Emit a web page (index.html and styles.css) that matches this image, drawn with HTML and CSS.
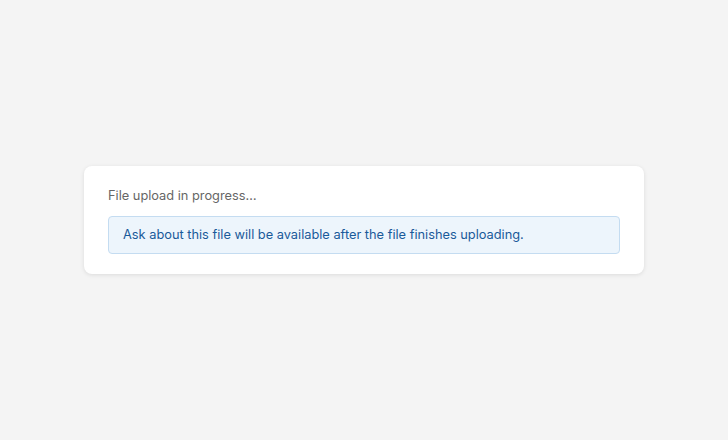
FILE: index.html
```html
<!DOCTYPE html>
<html lang="en">
<head>
    <meta charset="UTF-8">
    <meta name="viewport" content="width=device-width, initial-scale=1.0">
    <title>File upload</title>
    <link rel="stylesheet" href="styles.css">
</head>
<body>

<div class="card">
    <p class="card-title">File upload in progress…</p>
    <div class="notice">
        Ask about this file will be available after the file finishes uploading.
    </div>
</div>

</body>
</html>
```

FILE: styles.css
```css
/* Basic reset */
* {
    margin: 0;
    padding: 0;
    box-sizing: border-box;
    font-family: Inter, "Noto Sans", Arial, sans-serif;
}

body {
    background-color: #f4f4f4;
    display: flex;
    justify-content: center;
    align-items: center;
    min-height: 100vh;
}

/* Main card */
.card {
    width: 560px;
    background: #fff;
    padding: 20px 24px;
    border-radius: 8px;
    box-shadow: 0 1px 4px rgba(0, 0, 0, 0.1);
}

.card-title {
    font-size: 12.8px;
    line-height: 20px;
    color: #666;
    margin-bottom: 10px;
}

/* Info notice */
.notice {
    font-size: 12.8px;
    line-height: 20px;
    color: #1a5a9a;
    background-color: #edf5fc;
    border: 1px solid #c4dcf1;
    border-radius: 4px;
    padding: 8px 14px;
}
```
